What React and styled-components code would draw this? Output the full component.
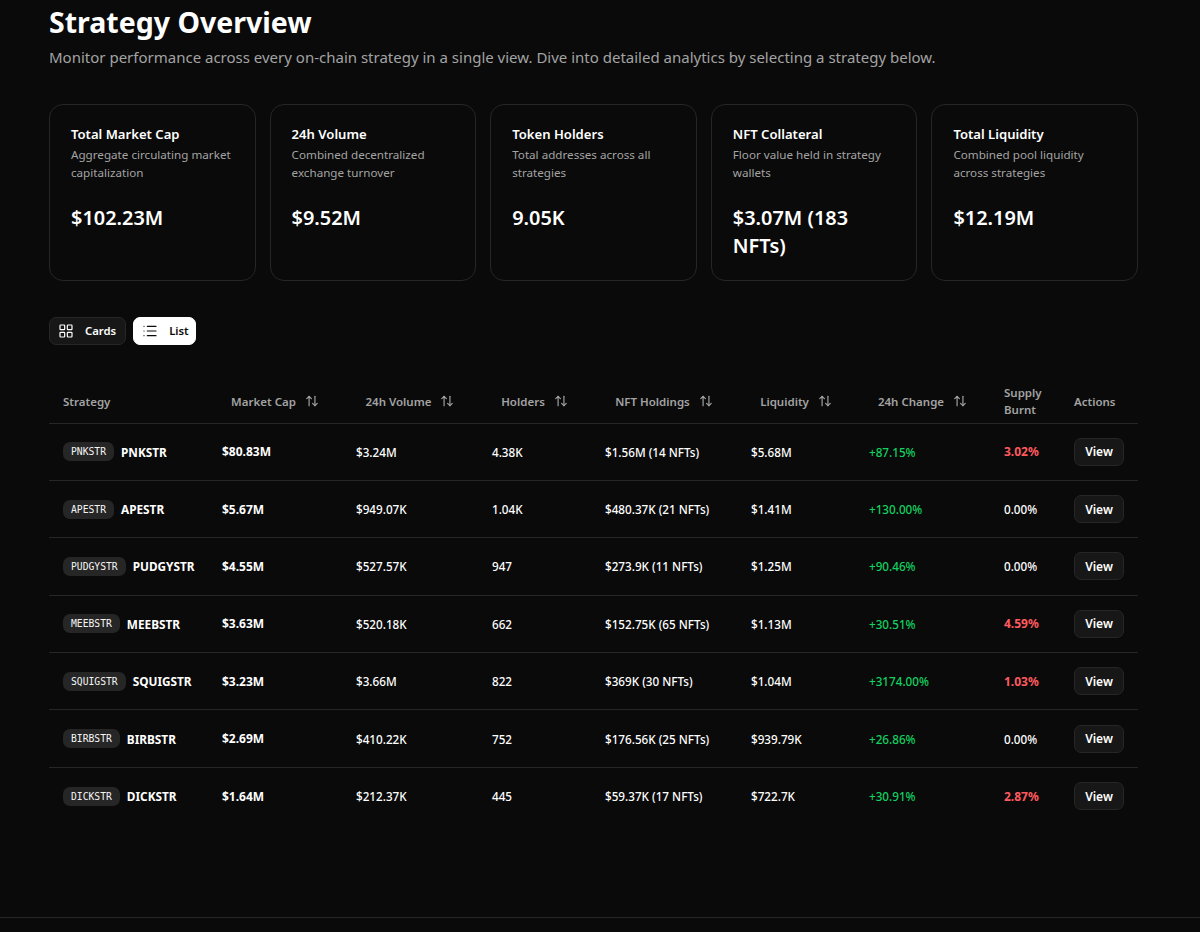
import React from 'react';
import styled, { createGlobalStyle } from 'styled-components';
import { LayoutGrid, List, ArrowUpDown } from 'lucide-react';

const Global = createGlobalStyle`
  html, body {
    margin: 0;
    height: 932px;
    overflow: hidden;
    background: #0a0a0a;
    color: #fff;
    font-family: "Noto Sans", "Open Sans", sans-serif;
  }
`;

const Page = styled.div`
  height: 932px;
  display: flex;
  flex-direction: column;
`;

const Main = styled.main`
  flex: 1;
  padding: 0 62px 0 49px;
`;

const Footer = styled.footer`
  height: 15px;
  box-sizing: border-box;
  border-top: 1px solid #262626;
`;

const Title = styled.h1`
  margin: 4px 0 0;
  font-size: 28.5px;
  line-height: 36px;
  font-weight: 700;
`;

const Subtitle = styled.p`
  margin: 5px 0 0;
  font-size: 15px;
  line-height: 24px;
  color: #a3a3a3;
`;

const Stats = styled.div`
  display: grid;
  grid-template-columns: repeat(5, 1fr);
  gap: 14px;
  margin-top: 35px;
`;

const StatCard = styled.div`
  height: 177px;
  box-sizing: border-box;
  padding: 21px 21px;
  border: 1px solid #262626;
  border-radius: 14px;
  background: #0a0a0a;
`;

const StatTitle = styled.div`
  font-size: 13.1px;
  line-height: 16px;
  font-weight: 600;
`;

const StatDesc = styled.div`
  margin-top: 4px;
  font-size: 11.65px;
  line-height: 18px;
  color: #a3a3a3;
`;

const StatValue = styled.div`
  margin-top: 22px;
  font-size: 19.9px;
  line-height: 28px;
  font-weight: 600;
`;

const Toggle = styled.div`
  display: flex;
  gap: 7px;
  margin-top: 36px;
`;

const ToggleButton = styled.div`
  height: 28px;
  box-sizing: border-box;
  display: flex;
  align-items: center;
  gap: 11px;
  padding: 0 ${p => (p.$active ? '6px' : '9px')} 0 8px;
  border-radius: 7px;
  border: 1px solid ${p => (p.$active ? '#fff' : '#262626')};
  background: ${p => (p.$active ? '#fff' : '#171717')};
  color: ${p => (p.$active ? '#0a0a0a' : '#fff')};
  font-size: 11.3px;
  line-height: 14px;
  font-weight: 600;
`;

const ToggleLabel = styled.span`
  margin-top: -1px;
`;

const Table = styled.table`
  width: 100%;
  margin-top: 27px;
  border-collapse: collapse;
  table-layout: fixed;
  font-size: 11.7px;
`;

const Head = styled.th`
  height: 51px;
  box-sizing: border-box;
  padding: 8px 14px 0;
  text-align: ${p => p.$align || 'left'};
  font-size: 11.5px;
  line-height: 17px;
  font-weight: 600;
  color: #a3a3a3;
  border-bottom: 1px solid #262626;
`;

const HeadInner = styled.span`
  display: inline-flex;
  align-items: center;
  gap: 9px;
`;

const Row = styled.tr`
  border-bottom: 1px solid #262626;
  &:last-child {
    border-bottom: none;
  }
`;

const Cell = styled.td`
  height: 57.4px;
  box-sizing: border-box;
  padding: 0 14px;
  color: ${p => p.$color || '#fff'};
  font-size: ${p => (p.$strong ? '12px' : '11.7px')};
  font-weight: ${p => (p.$strong ? 700 : 500)};
  white-space: nowrap;
`;

const StrategyName = styled.div`
  display: flex;
  align-items: center;
  gap: 7px;
  font-size: 11.8px;
  font-weight: 700;
`;

const Badge = styled.span`
  height: 19px;
  display: inline-flex;
  align-items: center;
  padding: 0 8px;
  border-radius: 7px;
  background: #262626;
  color: #f5f5f5;
  font-family: "DejaVu Sans Mono", "Liberation Mono", monospace;
  font-size: 9.7px;
  font-weight: 400;
`;

const ViewButton = styled.div`
  width: 50px;
  height: 28px;
  box-sizing: border-box;
  display: flex;
  align-items: center;
  justify-content: center;
  border: 1px solid #262626;
  border-radius: 7px;
  background: #171717;
  font-size: 12px;
  font-weight: 600;
`;

const stats = [
  ['Total Market Cap', 'Aggregate circulating market capitalization', '$102.23M'],
  ['24h Volume', 'Combined decentralized exchange turnover', '$9.52M'],
  ['Token Holders', 'Total addresses across all strategies', '9.05K'],
  ['NFT Collateral', 'Floor value held in strategy wallets', '$3.07M (183 NFTs)'],
  ['Total Liquidity', 'Combined pool liquidity across strategies', '$12.19M'],
];

const rows = [
  ['PNKSTR', '$80.83M', '$3.24M', '4.38K', '$1.56M (14 NFTs)', '$5.68M', '+87.15%', '3.02%'],
  ['APESTR', '$5.67M', '$949.07K', '1.04K', '$480.37K (21 NFTs)', '$1.41M', '+130.00%', '0.00%'],
  ['PUDGYSTR', '$4.55M', '$527.57K', '947', '$273.9K (11 NFTs)', '$1.25M', '+90.46%', '0.00%'],
  ['MEEBSTR', '$3.63M', '$520.18K', '662', '$152.75K (65 NFTs)', '$1.13M', '+30.51%', '4.59%'],
  ['SQUIGSTR', '$3.23M', '$3.66M', '822', '$369K (30 NFTs)', '$1.04M', '+3174.00%', '1.03%'],
  ['BIRBSTR', '$2.69M', '$410.22K', '752', '$176.56K (25 NFTs)', '$939.79K', '+26.86%', '0.00%'],
  ['DICKSTR', '$1.64M', '$212.37K', '445', '$59.37K (17 NFTs)', '$722.7K', '+30.91%', '2.87%'],
];

const columns = [
  { label: 'Market Cap', width: 134 },
  { label: '24h Volume', width: 136 },
  { label: 'Holders', width: 113 },
  { label: 'NFT Holdings', width: 146 },
  { label: 'Liquidity', width: 118 },
  { label: '24h Change', width: 135 },
];

const SortHead = ({ label }) => (
  <Head $align="center">
    <HeadInner>
      {label}
      <ArrowUpDown size={14} strokeWidth={2} />
    </HeadInner>
  </Head>
);

export default function App() {
  return (
    <Page>
      <Global />
      <Main>
        <Title>Strategy Overview</Title>
        <Subtitle>
          Monitor performance across every on-chain strategy in a single view. Dive into detailed analytics by selecting a strategy below.
        </Subtitle>
        <Stats>
          {stats.map(([title, desc, value]) => (
            <StatCard key={title}>
              <StatTitle>{title}</StatTitle>
              <StatDesc>{desc}</StatDesc>
              <StatValue>{value}</StatValue>
            </StatCard>
          ))}
        </Stats>
        <Toggle>
          <ToggleButton>
            <LayoutGrid size={16} strokeWidth={1.8} />
            <ToggleLabel>Cards</ToggleLabel>
          </ToggleButton>
          <ToggleButton $active>
            <List size={16} strokeWidth={1.8} />
            <ToggleLabel>List</ToggleLabel>
          </ToggleButton>
        </Toggle>
        <Table>
          <colgroup>
            <col style={{ width: 159 }} />
            {columns.map(c => (
              <col key={c.label} style={{ width: c.width }} />
            ))}
            <col style={{ width: 70 }} />
            <col />
          </colgroup>
          <thead>
            <tr>
              <Head>Strategy</Head>
              {columns.map(c => (
                <SortHead key={c.label} label={c.label} />
              ))}
              <Head>Supply Burnt</Head>
              <Head>Actions</Head>
            </tr>
          </thead>
          <tbody>
            {rows.map(([name, cap, vol, holders, nft, liq, change, burnt]) => (
              <Row key={name}>
                <Cell>
                  <StrategyName>
                    <Badge>{name}</Badge>
                    {name}
                  </StrategyName>
                </Cell>
                <Cell $strong>{cap}</Cell>
                <Cell>{vol}</Cell>
                <Cell>{holders}</Cell>
                <Cell>{nft}</Cell>
                <Cell>{liq}</Cell>
                <Cell $color="#12d160">{change}</Cell>
                <Cell $color={burnt === '0.00%' ? '#fff' : '#ff5a5f'} $strong={burnt !== '0.00%'}>{burnt}</Cell>
                <Cell>
                  <ViewButton>View</ViewButton>
                </Cell>
              </Row>
            ))}
          </tbody>
        </Table>
      </Main>
      <Footer />
    </Page>
  );
}
